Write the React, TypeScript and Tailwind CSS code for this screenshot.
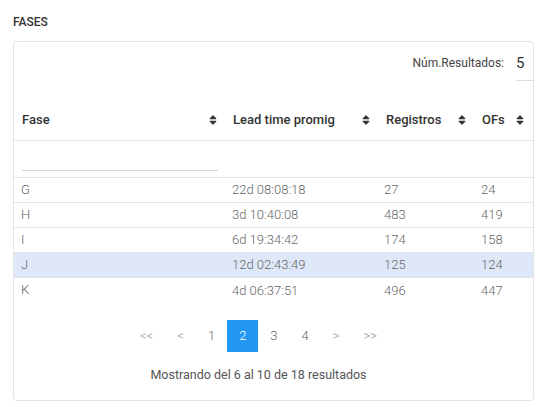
import React from 'react'

type Fila = { fase: string; lead: string; registros: number; ofs: number }

const filas: Fila[] = [
  { fase: 'G', lead: '22d 08:08:18', registros: 27, ofs: 24 },
  { fase: 'H', lead: '3d 10:40:08', registros: 483, ofs: 419 },
  { fase: 'I', lead: '6d 19:34:42', registros: 174, ofs: 158 },
  { fase: 'J', lead: '12d 02:43:49', registros: 125, ofs: 124 },
  { fase: 'K', lead: '4d 06:37:51', registros: 496, ofs: 447 },
]

function SortIcon() {
  return (
    <svg viewBox="0 0 320 512" className="h-[12px] w-[8px] shrink-0 fill-[#333]">
      <path d="M41 288h238c21.4 0 32.1 25.9 17 41L177 448c-9.4 9.4-24.6 9.4-33.9 0L24 329c-15.1-15.1-4.4-41 17-41zm255-105L177 64c-9.4-9.4-24.6-9.4-33.9 0L24 183c-15.1 15.1-4.4 41 17 41h238c21.4 0 32.1-25.9 17-41z" />
    </svg>
  )
}

function Th({ label, pr = 'pr-[8px]' }: { label: string; pr?: string }) {
  return (
    <th className={'h-[59px] border-b border-[#e2e2e2] pb-[12px] pl-[8px] align-bottom font-medium ' + pr}>
      <div className="flex items-center justify-between leading-[16px]">
        <span>{label}</span>
        <SortIcon />
      </div>
    </th>
  )
}

const paginas = ['<<', '<', '1', '2', '3', '4', '>', '>>']

export default function App() {
  return (
    <div className="h-[407px] w-[547px] bg-white font-['Roboto',sans-serif] text-[#333]">
      <div className="px-[13px] pt-[14px]">
        <p className="text-[12px] font-medium leading-[16px]">FASES</p>
        <div className="mt-[11px] rounded-[4px] border border-[#e3e3e3]">
          <div className="flex justify-end">
            <span className="pt-[13px] text-[12px] leading-[16px] text-[#444]">Núm.Resultados:</span>
            <div className="ml-[12px] h-[39px] w-[17px] border-b border-[#dcdcdc] pt-[12px] text-[15px] leading-[18px] text-[#333]">5</div>
          </div>
          <table className="w-full table-fixed border-collapse text-left text-[13px]">
            <colgroup>
              <col className="w-[211px]" />
              <col className="w-[153px]" />
              <col className="w-[96px]" />
              <col />
            </colgroup>
            <thead>
              <tr>
                <Th label="Fase" />
                <Th label="Lead time promig" />
                <Th label="Registros" />
                <Th label="OFs" pr="pr-[9px]" />
              </tr>
              <tr className="border-b border-[#e2e2e2]">
                <td className="h-[37px] px-[8px] pb-[6px] align-bottom">
                  <div className="h-[1px] w-[196px] bg-[#d6d6d6]" />
                </td>
                <td />
                <td />
                <td />
              </tr>
            </thead>
            <tbody className="text-[13px] font-light text-[#666]">
              {filas.map((f, i) => (
                <tr key={f.fase} className={(i === 3 ? 'bg-[#dfe8f8] ' : '') + (i < filas.length - 1 ? 'border-b border-[#e2e2e2]' : '')}>
                  <td className="h-[25px] px-[7px] pt-[1px] leading-[16px] text-[#666]">{f.fase}</td>
                  <td className="px-[7px] pt-[1px]">{f.lead}</td>
                  <td className="px-[6px] pt-[1px]">{f.registros}</td>
                  <td className="px-[7px] pt-[1px]">{f.ofs}</td>
                </tr>
              ))}
            </tbody>
          </table>
          <div className="mt-[18px] flex justify-center pr-[30px]">
            {paginas.map((p) => (
              <span
                key={p}
                className={
                  'flex h-[32px] items-center px-[12px] text-[13px] font-light ' +
                  (p === '2' ? 'bg-[#2196f3] text-white' : p.includes('<') || p.includes('>') ? 'text-[#999]' : 'text-[#666]')
                }
              >
                {p}
              </span>
            ))}
          </div>
          <p className="mt-[15px] pb-[17px] pr-[30px] text-center text-[12.5px] leading-[16px] text-[#555]">
            Mostrando del 6 al 10 de 18 resultados
          </p>
        </div>
      </div>
    </div>
  )
}
